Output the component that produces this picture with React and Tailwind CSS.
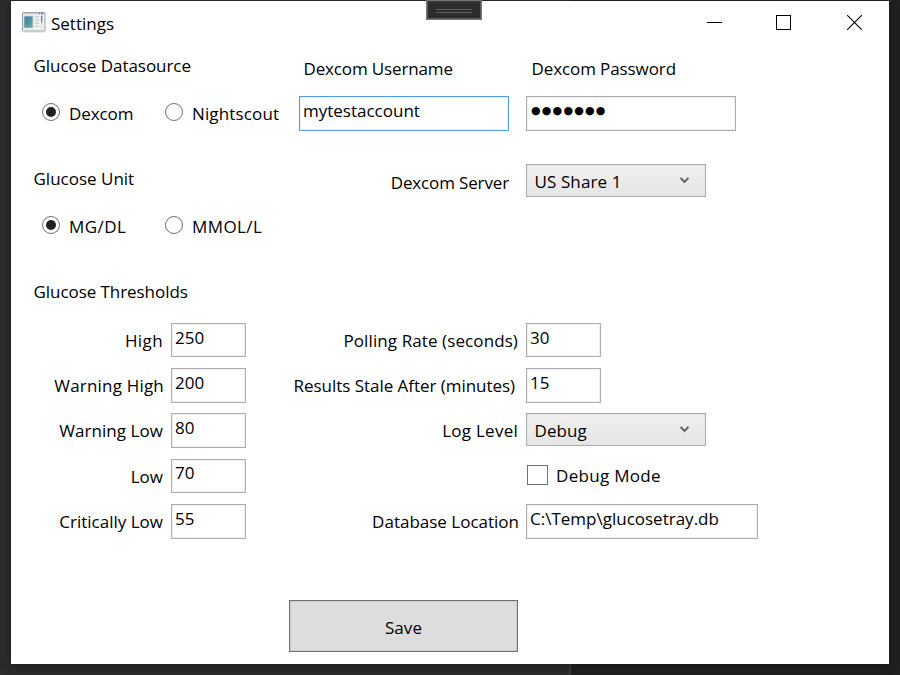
import React from "react";

const TEXT = "block h-6 whitespace-nowrap leading-[26px]";

function Label({ children, className = "" }) {
  return <div className={`${TEXT} ${className}`}>{children}</div>;
}

function Radio({ checked, children, className = "", dotClass = "", textClass = "" }) {
  return (
    <label className={`flex h-6 items-start ${className}`}>
      <span
        className={`flex size-[18px] shrink-0 items-center justify-center rounded-full border-[1.3px] border-[#707070] bg-white ${dotClass}`}
      >
        {checked && <span className="size-[9.5px] rounded-full bg-[#212121]" />}
      </span>
      <span className={`${TEXT} ml-[9px] ${textClass}`}>{children}</span>
    </label>
  );
}

function Field({ children, className = "", textClass = "", focused = false }) {
  return (
    <div
      className={`shrink-0 border bg-white pl-[3px] ${
        focused
          ? "border-[#569de5] shadow-[inset_0_0_0_1px_#e9f2fc]"
          : "border-[#abadb3] shadow-[inset_0_0_0_1px_#f0f0f2]"
      } ${className}`}
    >
      <div className={`${TEXT} ${textClass}`}>{children}</div>
    </div>
  );
}

function Select({ children, textClass = "" }) {
  return (
    <div className="flex h-[33px] w-[180px] shrink-0 items-start justify-between border border-[#acacac] bg-linear-to-b from-[#f0f0f0] to-[#e5e5e5] pt-1 pr-4 pl-[7.5px] shadow-[inset_0_0_0_1px_#e6e6e6]">
      <span className={`${TEXT} ${textClass}`}>{children}</span>
      <svg className="mt-2 h-[7px] w-[9px]" viewBox="0 0 9 7" fill="none">
        <path d="M0.6 1 L4.5 5 L8.4 1" stroke="#606060" strokeWidth="1.9" />
      </svg>
    </div>
  );
}

function AppIcon() {
  return (
    <svg className="h-[21px] w-[24px]" viewBox="0 0 24 21">
      <defs>
        <linearGradient id="pane" x1="0" y1="0" x2="1" y2="1">
          <stop offset="0" stopColor="#4a78ab" />
          <stop offset="0.5" stopColor="#4f94a0" />
          <stop offset="1" stopColor="#74bd84" />
        </linearGradient>
        <linearGradient id="bar" x1="0" y1="0" x2="0" y2="1">
          <stop offset="0" stopColor="#3f70b3" />
          <stop offset="1" stopColor="#58ad78" />
        </linearGradient>
      </defs>
      <rect x="0.5" y="0.5" width="22.5" height="18.5" rx="0.8" fill="#f0f1f2" stroke="#9aa0a7" />
      <rect x="1" y="1" width="21.5" height="1.4" fill="#c9ced4" />
      <rect x="17" y="1.2" width="1" height="1" fill="#6a7480" />
      <rect x="19" y="1.2" width="2" height="1" fill="#6a7480" />
      <rect x="2" y="4" width="9" height="12" fill="url(#pane)" stroke="#c6d6dc" strokeWidth="0.8" />
      <path d="M13 4.7h4M13 7.9h4M13 11.1h4M13 14.3h4" stroke="#cfd0d2" strokeWidth="1.5" />
      <rect x="19" y="3.8" width="1.3" height="7" fill="url(#bar)" />
      <path d="M18.5 13h2.5M18.5 15.5h2.5" stroke="#dedfe0" />
      <path d="M1 20h22" stroke="#c9cbce" strokeWidth="0.8" />
    </svg>
  );
}

function TitleBar() {
  return (
    <header className="flex h-[45px] items-start pl-[11px]">
      <div className="mt-[11px]">
        <AppIcon />
      </div>
      <Label className="mt-[10px] ml-[5px]">Settings</Label>
      <div className="mt-[14px] mr-[27px] ml-auto flex">
        <svg className="size-[15px]" viewBox="0 0 15 15">
          <path d="M0 7.5h15" stroke="#000" />
        </svg>
        <svg className="ml-[54px] size-[15px]" viewBox="0 0 15 15">
          <rect x="0.5" y="0.5" width="14" height="14" fill="none" stroke="#000" />
        </svg>
        <svg className="ml-[56px] size-[15px]" viewBox="0 0 15 15">
          <path d="M0 0L15 15M15 0L0 15" stroke="#000" strokeWidth="1.1" />
        </svg>
      </div>
    </header>
  );
}

const thresholds = [
  { label: "High", value: "250", row: "h-[34px]", labelClass: "tracking-[0.4px] pr-px", box: "pt-px" },
  { label: "Warning High", value: "200", row: "h-[35px] mt-[11px]", labelClass: "tracking-[0.19px]", box: "pt-px" },
  { label: "Warning Low", value: "80", row: "h-[35px] mt-[10px]", labelClass: "tracking-[0.05px] pr-px", box: "pt-px" },
  { label: "Low", value: "70", row: "h-[34px] mt-[11px]", labelClass: "pr-px", box: "" },
  { label: "Critically Low", value: "55", row: "h-[35px] mt-[11px]", labelClass: "pr-px", box: "pt-px" },
];

function Row({ label, labelClass = "", className = "", children }) {
  return (
    <div className={`flex items-start ${className}`}>
      <Label className={`mt-[5px] mr-[7px] w-[230px] text-right ${labelClass}`}>{label}</Label>
      {children}
    </div>
  );
}

export default function App() {
  return (
    <div className="relative h-[675px] w-[900px] overflow-hidden bg-[#2b2b2d] pt-px pl-[11px] font-['Open_Sans','Noto_Sans',sans-serif] text-[17px] text-black">
      <div className="absolute inset-y-0 right-0 w-[329px] bg-[#202020]" />
      <div className="absolute bottom-0 left-[569px] h-3 w-[2px] bg-[#38383c]" />
      <main className="relative h-[663px] w-[878px] bg-white shadow-[0_2px_9px_rgba(0,0,0,0.35)]">
        <TitleBar />
        <div className="flex h-[554px]">
          <section className="w-[278px] pt-[7px]">
            <Label className="ml-[22.5px] tracking-[-0.04px]">Glucose Datasource</Label>
            <div className="mt-6 flex pl-[31px]">
              <Radio checked className="w-[123px]" dotClass="mt-[2px]" textClass="tracking-[-0.1px]">Dexcom</Radio>
              <Radio dotClass="mt-[2px]" textClass="tracking-[0.14px]">Nightscout</Radio>
            </div>
            <Label className="mt-[41px] ml-[22.5px]">Glucose Unit</Label>
            <div className="mt-6 flex pl-[31px]">
              <Radio checked className="w-[123px]" dotClass="mt-[2px]" textClass="tracking-[0.45px]">MG/DL</Radio>
              <Radio dotClass="mt-[2px]" textClass="tracking-[0.42px]">MMOL/L</Radio>
            </div>
            <Label className="mt-[41px] ml-[22.5px] tracking-[-0.06px]">Glucose Thresholds</Label>
            <div className="mt-5">
              {thresholds.map((t) => (
                <div key={t.label} className={`flex items-start ${t.row}`}>
                  <Label className={`mt-[5px] mr-[7px] w-[153px] text-right ${t.labelClass}`}>{t.label}</Label>
                  <Field className={`h-full w-[75px] ${t.box}`}>{t.value}</Field>
                </div>
              ))}
            </div>
          </section>

          <section className="flex-1 pt-[10px]">
            <div className="flex pl-[14.5px]">
              <Label className="w-[228px] tracking-[-0.14px]">Dexcom Username</Label>
              <Label className="tracking-[-0.1px]">Dexcom Password</Label>
            </div>
            <div className="mt-4 flex gap-[17px] pl-[10px]">
              <Field focused className="h-[35px] w-[210px] pt-px">mytestaccount</Field>
              <Field
                className="h-[35px] w-[210px] pt-px"
                textClass="pl-px font-['DejaVu_Sans'] text-[11px] tracking-[1.2px]"
              >
                ●●●●●●●
              </Field>
            </div>
            <div className="mt-[33px] flex items-start">
              <Label className="mt-[6px] mr-[17px] w-[220px] text-right tracking-[-0.14px]">Dexcom Server</Label>
              <Select textClass="tracking-[0.1px]">US Share 1</Select>
            </div>

            <Row label="Polling Rate (seconds)" labelClass="pr-px tracking-[0.1px]" className="mt-[126px]">
              <Field className="h-[34px] w-[75px] pt-px">30</Field>
            </Row>
            <Row
              label="Results Stale After (minutes)"
              labelClass="pr-[4px] tracking-[-0.04px]"
              className="mt-[11px]"
            >
              <Field className="h-[35px] w-[75px] pt-px">15</Field>
            </Row>
            <Row label="Log Level" labelClass="pr-px tracking-[0.25px]" className="mt-[10px]">
              <Select textClass="tracking-[0.1px]">Debug</Select>
            </Row>
            <label className="mt-[17px] flex h-[22px] items-start pl-[238px]">
              <span className="mt-[2px] h-5 w-[21px] border-[1.3px] border-[#707070] bg-white" />
              <span className={`${TEXT} ml-[8px] tracking-[0.31px]`}>Debug Mode</span>
            </label>
            <Row label="Database Location" className="mt-[19px]">
              <Field className="h-[35px] w-[232px] pt-px">C:\Temp\glucosetray.db</Field>
            </Row>
          </section>
        </div>
        <button className="ml-[278px] flex h-[52px] w-[229px] items-start justify-center border border-[#707070] bg-[#dddddd] pt-[14px] shadow-[inset_0_0_0_1px_#cfcfcf]">
          <span className={`${TEXT} tracking-[0.08px]`}>Save</span>
        </button>
      </main>
      <div className="absolute top-0 left-[426px] flex h-[20px] w-[56px] flex-col items-center gap-[2px] border-2 border-[#5a5a5a] border-t-[#3a3a3c] bg-[#2d2d30] pt-[7px] outline-1 -outline-offset-1 outline-[#757575]">
        <span className="h-px w-9 bg-[#5c5c5f]" />
        <span className="h-px w-9 bg-[#5c5c5f]" />
      </div>
    </div>
  );
}
